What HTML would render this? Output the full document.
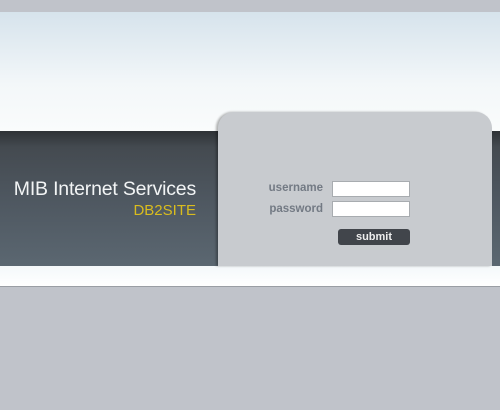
<!DOCTYPE html>
<html><head><style>
body{margin:0;width:500px;height:410px;overflow:hidden;background:#c0c3ca;font-family:"Liberation Sans",sans-serif;position:relative}
.top{position:absolute;left:0;top:12px;width:500px;height:120px;background:linear-gradient(#d6e3ec,#f3f7f9 60%,#fafcfc)}
.band{position:absolute;left:0;top:131px;width:500px;height:135px;background:linear-gradient(#2e3236,#444a50 12%,#4e5760 50%,#5b6771)}
.strip{position:absolute;left:0;top:266px;width:500px;height:20px;background:linear-gradient(#f4f8fa,#fff);border-bottom:1px solid #9a9ea4}
.panel{position:absolute;left:218px;top:112px;width:274px;height:154px;background:#c8cbcf;border-radius:16px 16px 0 0;box-shadow:-2px 0 2px rgba(0,0,0,.3)}
.t1{position:absolute;right:304px;top:178px;color:#f2f4f5;font-size:19.5px;white-space:nowrap;letter-spacing:-0.2px}
.t2{position:absolute;right:304px;top:202px;color:#d9bc1e;font-size:15px}
.lbl{position:absolute;right:177px;color:#737a84;font-weight:bold;font-size:11.5px}
.in{position:absolute;left:332px;width:76px;height:14px;background:#fff;border:1px solid #a8acb0}
.btn{position:absolute;left:338px;top:229px;width:72px;height:16px;background:#41454b;border-radius:3px;color:#eee;font-weight:bold;font-size:11px;text-align:center;line-height:16px}
</style></head><body>
<div class="top"></div><div class="band"></div><div class="strip"></div>
<div class="panel"></div>
<div class="t1">MIB Internet Services</div>
<div class="t2">DB2SITE</div>
<div class="lbl" style="top:182px">username</div>
<div class="lbl" style="top:203px">password</div>
<div class="in" style="top:181px"></div>
<div class="in" style="top:201px"></div>
<div class="btn">submit</div>
</body></html>
